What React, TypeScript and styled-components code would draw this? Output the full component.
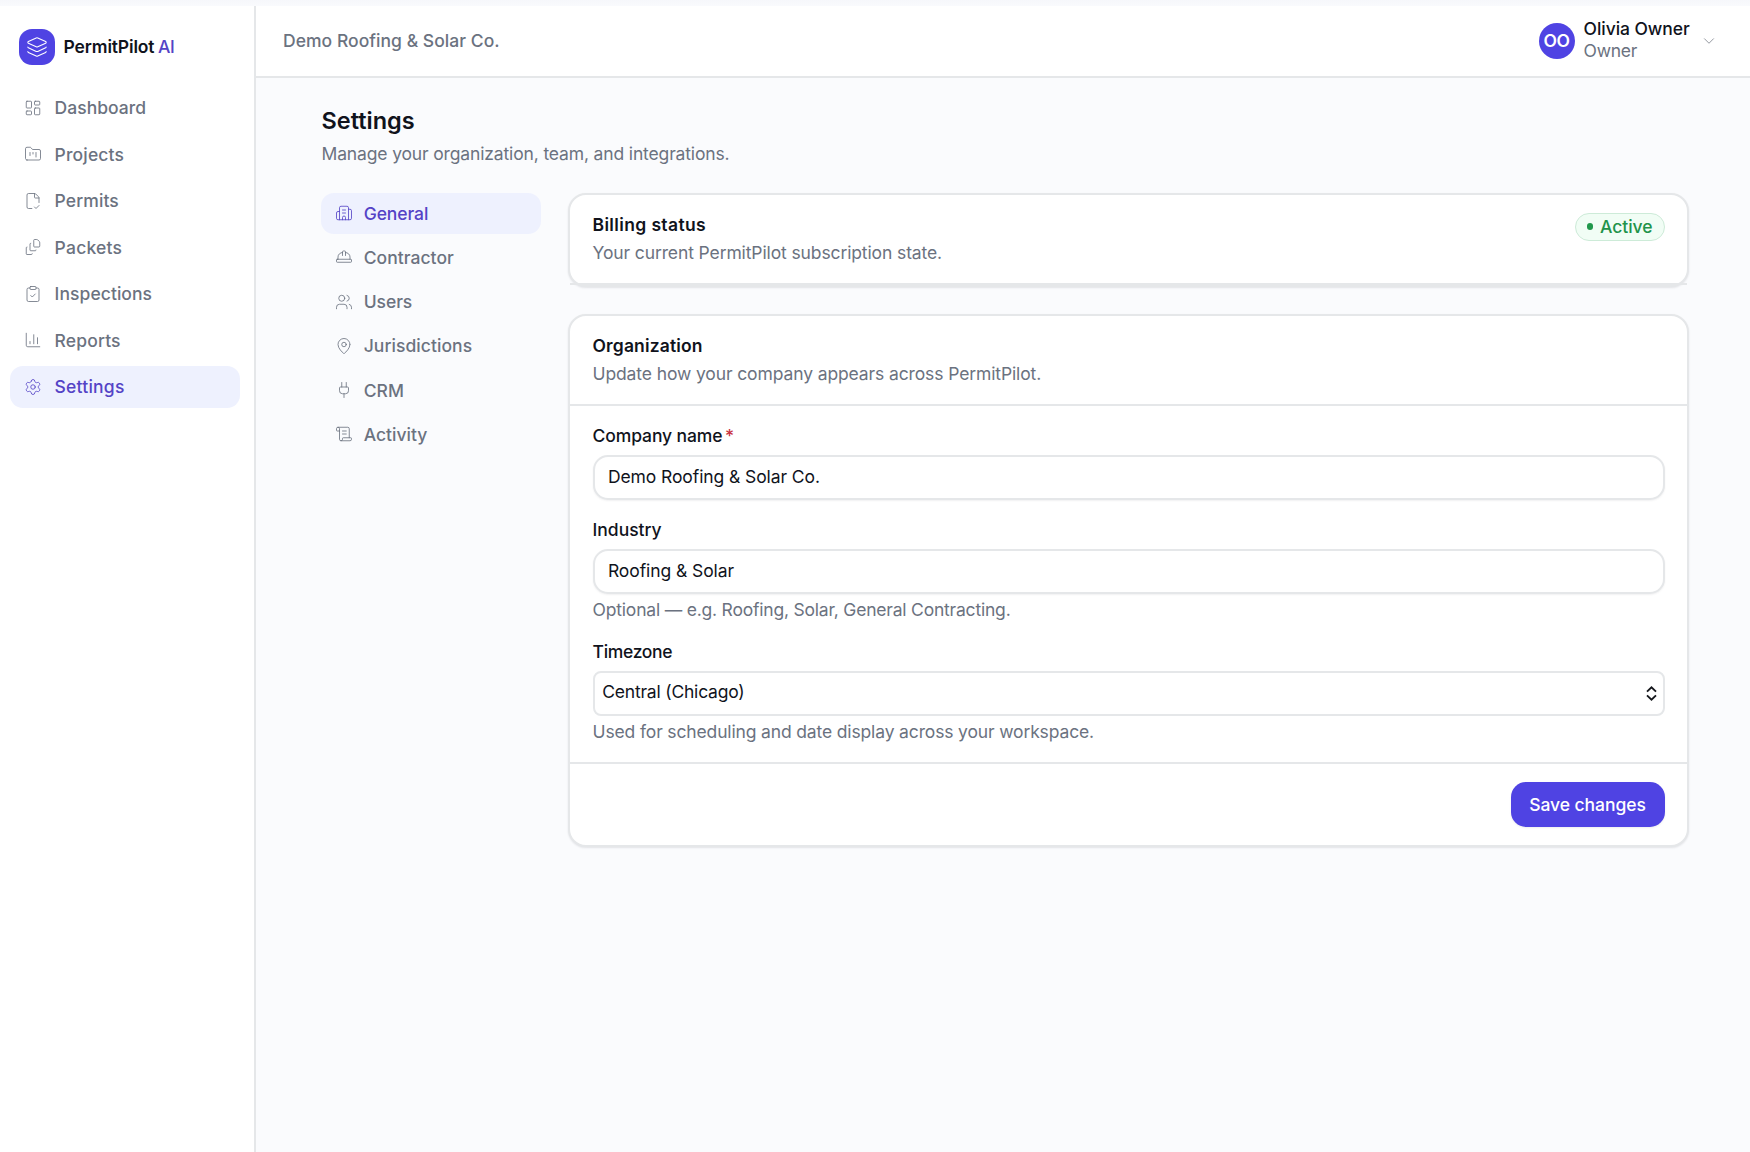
import React from "react";
import styled, { createGlobalStyle } from "styled-components";
import {
  Building2,
  ChartColumn,
  ChevronDown,
  ClipboardCheck,
  FileCheck2,
  FileStack,
  FolderKanban,
  HardHat,
  Layers,
  LayoutDashboard,
  MapPin,
  Plug,
  ScrollText,
  Settings,
  Users,
} from "lucide-react";

const c = {
  ink: "#10131c",
  muted: "#6b7280",
  line: "#e5e7e9",
  canvas: "#fafbfd",
  brand: "#4f43e3",
  brandText: "#5443c6",
  brandSoft: "#eef1fe",
};

const GlobalStyle = createGlobalStyle`
  *, *::before, *::after { box-sizing: border-box; }
  body {
    margin: 0;
    background: ${c.canvas};
    color: ${c.ink};
    font-family: Inter, "Liberation Sans", sans-serif;
    font-size: 17.5px;
  }
  h1, h2, p { margin: 0; }
`;

const Page = styled.div`
  display: flex;
  flex-direction: column;
  height: 1152px;
  overflow: hidden;
`;

const TopStrip = styled.div`
  flex: none;
  height: 6px;
  background: linear-gradient(#f6f7fb, #f9fafd);
`;

const Shell = styled.div`
  flex: 1;
  display: grid;
  grid-template-columns: 256px 1fr;
`;

const Sidebar = styled.aside`
  background: #fff;
  border-right: 2px solid ${c.line};
  padding: 23px 14px 0 10px;
`;

const Brand = styled.div`
  display: flex;
  align-items: center;
  gap: 8.6px;
  height: 36px;
  padding-left: 9px;
  font-weight: 600;
  letter-spacing: -0.15px;
`;

const BrandName = styled.span`
  padding-bottom: 1.4px;
`;

const BrandMark = styled.span`
  display: grid;
  place-items: center;
  width: 36px;
  height: 36px;
  border-radius: 13px;
  background: ${c.brand};
  color: #fff;
`;

const BrandAccent = styled.span`
  margin-left: -0.6px;
  color: ${c.brandText};
  font-weight: 500;
  letter-spacing: -0.6px;
`;

const Nav = styled.nav`
  display: flex;
  flex-direction: column;
  gap: 4.55px;
  margin-top: 21.5px;
`;

const NavItem = styled.a<{ $active?: boolean; $track: number }>`
  display: flex;
  align-items: center;
  gap: 12.6px;
  height: 42px;
  padding-left: 14px;
  border-radius: 13px;
  font-weight: 500;
  letter-spacing: ${(p) => p.$track}px;
  color: ${(p) => (p.$active ? c.brandText : c.muted)};
  background: ${(p) => (p.$active ? c.brandSoft : "transparent")};
`;

const SubNav = styled(Nav)`
  gap: 3.27px;
  margin: -0.4px 0.5px 0 -0.6px;
`;

const SubNavItem = styled(NavItem)`
  gap: 10.8px;
  height: 41px;
`;

const Main = styled.div`
  display: flex;
  flex-direction: column;
`;

const Header = styled.header`
  display: flex;
  align-items: center;
  justify-content: space-between;
  height: 72px;
  padding: 0 32px 0 27px;
  background: #fff;
  border-bottom: 2px solid ${c.line};
`;

const OrgName = styled.div`
  padding-bottom: 2px;
  font-weight: 500;
  letter-spacing: 0.045px;
  color: ${c.muted};
`;

const Account = styled.div`
  display: flex;
  align-items: center;
`;

const Avatar = styled.div`
  display: grid;
  place-items: center;
  width: 36px;
  height: 36px;
  margin-right: 9px;
  padding-bottom: 1.4px;
  border-radius: 50%;
  background: ${c.brand};
  color: #fff;
  font-weight: 600;
  letter-spacing: -0.3px;
`;

const Person = styled.div`
  margin-right: 10.3px;
  padding-bottom: 2px;
  line-height: 22px;
`;

const PersonName = styled.div`
  font-weight: 500;
  letter-spacing: -0.06px;
`;

const PersonRole = styled.div`
  color: ${c.muted};
  letter-spacing: -0.3px;
`;

const ChevronSlot = styled.span`
  display: flex;
  color: #7d828c;
`;

const Content = styled.main`
  padding: 27.2px 61px 0 65.5px;
`;

const Title = styled.h1`
  font-size: 23.5px;
  font-weight: 600;
  line-height: 32px;
`;

const Subtitle = styled.p`
  margin-top: 3.5px;
  line-height: 26px;
  letter-spacing: -0.145px;
  color: ${c.muted};
`;

const Columns = styled.div`
  display: grid;
  grid-template-columns: 220px 1fr;
  gap: 26.5px;
  align-items: start;
  margin-top: 26.3px;
`;

const Cards = styled.div`
  display: flex;
  flex-direction: column;
  gap: 27px;
`;

const Card = styled.section`
  border: 2px solid ${c.line};
  border-radius: 18px;
  background: #fff;
  box-shadow: 0 1px 2px rgba(16, 24, 40, 0.1);
`;

const CardHeader = styled.div`
  display: flex;
  justify-content: space-between;
  align-items: flex-start;
  height: 90px;
  padding: 16.2px 22px 0 22.5px;
  border-bottom: 2px solid ${c.line};
`;

const CardTitle = styled.h2<{ $track: number }>`
  font-size: 17.5px;
  font-weight: 600;
  line-height: 28px;
  letter-spacing: ${(p) => p.$track}px;
`;

const CardText = styled.p`
  line-height: 28px;
  letter-spacing: -0.115px;
  color: ${c.muted};
`;

const Badge = styled.span`
  display: inline-flex;
  align-items: center;
  gap: 6.5px;
  height: 28px;
  margin-top: 2px;
  padding: 0 11.6px 1.4px 11px;
  border: 1px solid #cdebd8;
  border-radius: 14px;
  background: #f1fdf5;
  color: #21934a;
  font-weight: 500;
  letter-spacing: -0.05px;
`;

const Dot = styled.span`
  width: 6.5px;
  height: 6.5px;
  border-radius: 50%;
  background: #21984c;
`;

const CardBody = styled.div`
  display: flex;
  flex-direction: column;
  gap: 17px;
  padding: 16.8px 22px 18.1px 22.6px;
`;

const Label = styled.div<{ $track: number }>`
  display: flex;
  gap: 2.6px;
  margin-bottom: 6.2px;
  line-height: 26px;
  font-weight: 500;
  letter-spacing: ${(p) => p.$track}px;
`;

const Required = styled.span`
  color: #c93340;
`;

const Control = styled.div<{ $track: number }>`
  display: flex;
  align-items: center;
  height: 45px;
  padding: 0 13.3px 1.6px;
  border: 2px solid ${c.line};
  border-radius: 15px;
  background: #fff;
  box-shadow: 0 1px 2px rgba(16, 24, 40, 0.06);
  letter-spacing: ${(p) => p.$track}px;
`;

const SelectControl = styled(Control)`
  justify-content: space-between;
  padding: 0 5.6px 4.2px 7.7px;
  border-radius: 8px;
  box-shadow: none;
`;

const SortArrows = styled.svg`
  position: relative;
  top: 2.1px;
`;

const Hint = styled.p<{ $track: number }>`
  margin-top: 4px;
  margin-bottom: -0.2px;
  line-height: 24px;
  letter-spacing: ${(p) => p.$track}px;
  color: ${c.muted};
`;

const CardFooter = styled.div`
  display: flex;
  justify-content: flex-end;
  padding: 18px 22px;
  border-top: 2px solid ${c.line};
`;

const SaveButton = styled.button`
  width: 154px;
  height: 45px;
  padding: 0 1px 0 0;
  border: 0;
  border-radius: 15px;
  background: ${c.brand};
  color: #fff;
  font: inherit;
  font-weight: 500;
  letter-spacing: -0.05px;
  box-shadow: 0 1px 2px rgba(16, 24, 40, 0.08);
`;

const icon = { size: 18, strokeWidth: 1.1 };

const mainNav = [
  { label: "Dashboard", Icon: LayoutDashboard, track: 0.031 },
  { label: "Projects", Icon: FolderKanban, track: 0.168 },
  { label: "Permits", Icon: FileCheck2, track: 0.093 },
  { label: "Packets", Icon: FileStack, track: 0.223 },
  { label: "Inspections", Icon: ClipboardCheck, track: 0.062 },
  { label: "Reports", Icon: ChartColumn, track: 0.144 },
  { label: "Settings", Icon: Settings, track: 0.216, active: true },
];

const settingsNav = [
  { label: "General", Icon: Building2, track: -0.1, active: true },
  { label: "Contractor", Icon: HardHat, track: 0.04 },
  { label: "Users", Icon: Users, track: -0.07 },
  { label: "Jurisdictions", Icon: MapPin, track: 0.06 },
  { label: "CRM", Icon: Plug, track: 0.063 },
  { label: "Activity", Icon: ScrollText, track: 0.02 },
];

export default function App() {
  return (
    <Page>
      <GlobalStyle />
      <TopStrip />
      <Shell>
        <Sidebar>
          <Brand>
            <BrandMark>
              <Layers size={22} strokeWidth={1.15} />
            </BrandMark>
            <BrandName>
              PermitPilot <BrandAccent>AI</BrandAccent>
            </BrandName>
          </Brand>
          <Nav>
            {mainNav.map(({ label, Icon, track, active }) => (
              <NavItem key={label} $active={active} $track={track}>
                <Icon {...icon} />
                {label}
              </NavItem>
            ))}
          </Nav>
        </Sidebar>
        <Main>
          <Header>
            <OrgName>Demo Roofing &amp; Solar Co.</OrgName>
            <Account>
              <Avatar>OO</Avatar>
              <Person>
                <PersonName>Olivia Owner</PersonName>
                <PersonRole>Owner</PersonRole>
              </Person>
              <ChevronSlot>
                <ChevronDown {...icon} />
              </ChevronSlot>
            </Account>
          </Header>
          <Content>
            <Title>Settings</Title>
            <Subtitle>Manage your organization, team, and integrations.</Subtitle>
            <Columns>
              <SubNav>
                {settingsNav.map(({ label, Icon, track, active }) => (
                  <SubNavItem key={label} $active={active} $track={track}>
                    <Icon {...icon} />
                    {label}
                  </SubNavItem>
                ))}
              </SubNav>
              <Cards>
                <Card>
                  <CardHeader>
                    <div>
                      <CardTitle $track={0.37}>Billing status</CardTitle>
                      <CardText>Your current PermitPilot subscription state.</CardText>
                    </div>
                    <Badge>
                      <Dot />
                      Active
                    </Badge>
                  </CardHeader>
                </Card>
                <Card>
                  <CardHeader>
                    <div>
                      <CardTitle $track={0.15}>Organization</CardTitle>
                      <CardText>Update how your company appears across PermitPilot.</CardText>
                    </div>
                  </CardHeader>
                  <CardBody>
                    <div>
                      <Label $track={-0.11}>
                        Company name<Required>*</Required>
                      </Label>
                      <Control $track={-0.089}>Demo Roofing &amp; Solar Co.</Control>
                    </div>
                    <div>
                      <Label $track={-0.02}>Industry</Label>
                      <Control $track={-0.08}>Roofing &amp; Solar</Control>
                      <Hint $track={-0.203}>Optional — e.g. Roofing, Solar, General Contracting.</Hint>
                    </div>
                    <div>
                      <Label $track={-0.33}>Timezone</Label>
                      <SelectControl $track={-0.21}>
                        Central (Chicago)
                        <SortArrows width="11" height="15" viewBox="0 0 11 15" fill="none" stroke="#15171c" strokeWidth="1.9">
                          <path d="M1 5.6 5.5 1.4 10 5.6M1 9.4l4.5 4.2L10 9.4" />
                        </SortArrows>
                      </SelectControl>
                      <Hint $track={-0.145}>Used for scheduling and date display across your workspace.</Hint>
                    </div>
                  </CardBody>
                  <CardFooter>
                    <SaveButton>Save changes</SaveButton>
                  </CardFooter>
                </Card>
              </Cards>
            </Columns>
          </Content>
        </Main>
      </Shell>
    </Page>
  );
}
